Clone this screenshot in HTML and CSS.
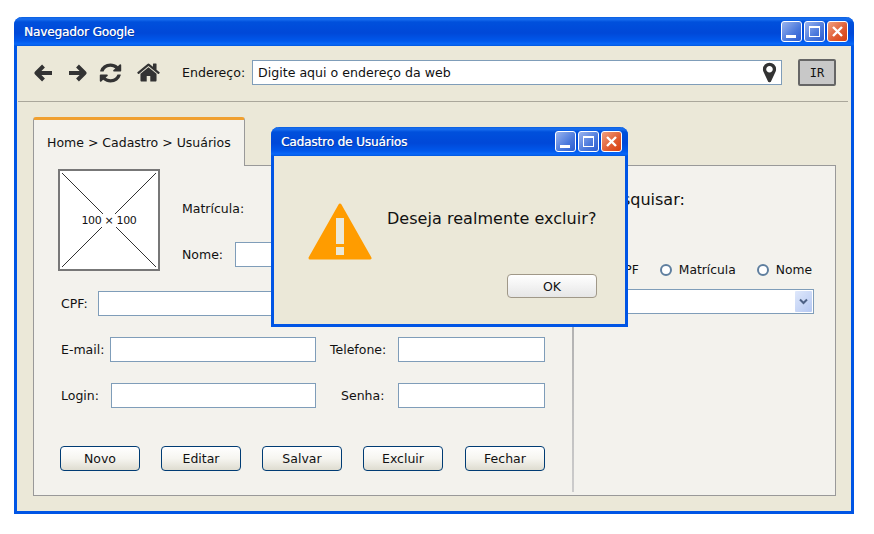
FILE: index.html
```html
<!DOCTYPE html>
<html lang="en">
<head>
  <meta charset="UTF-8">
  <meta name="viewport" content="width=device-width, initial-scale=1.0">
  <title>Navegador Google</title>
  <link rel="stylesheet" href="styles.css">
</head>
<body>

  <div class="window">
    <div class="titlebar">
      <span class="title">Navegador Google</span>
      <div class="win-buttons">
        <span class="win-btn"><i class="min-glyph"></i></span>
        <span class="win-btn"><i class="max-glyph"></i></span>
        <span class="win-btn close">
          <svg viewBox="0 0 21 21" width="21" height="21"><path d="M6 6l9 9M15 6l-9 9" stroke="#fff" stroke-width="2.4" fill="none"/></svg>
        </span>
      </div>
    </div>

    <div class="toolbar">
      <svg class="nav-icon arrow-back" viewBox="0 0 20 20" width="20" height="20"><path d="M18 10H4M9.500 3L2.500 10l7 7" stroke="#333" stroke-width="4" fill="none" stroke-linejoin="round"/></svg>
      <svg class="nav-icon arrow-forward" viewBox="0 0 20 20" width="20" height="20"><path d="M2 10h14M10.500 3l7 7-7 7" stroke="#333" stroke-width="4" fill="none" stroke-linejoin="round"/></svg>
      <svg class="nav-icon refresh" viewBox="0 0 1792 1792" width="25" height="22" preserveAspectRatio="none"><path fill="#333" d="M1639 1056q0 5-1 7-64 268-268 434.500t-478 166.500q-146 0-282.500-55t-243.500-157l-129 129q-19 19-45 19t-45-19-19-45v-448q0-26 19-45t45-19h448q26 0 45 19t19 45-19 45l-137 137q71 66 161 102t187 36q134 0 250-65t186-179q11-17 53-117 8-23 30-23h192q13 0 22.500 9.500t9.500 22.500zm25-800v448q0 26-19 45t-45 19h-448q-26 0-45-19t-19-45 19-45l138-138q-148-137-349-137-134 0-250 65t-186 179q-11 17-53 117-8 23-30 23h-199q-13 0-22.500-9.500t-9.500-22.500v-7q65-268 270-434.500t480-166.500q146 0 284 55.500t245 156.500l130-129q19-19 45-19t45 19 19 45z"/></svg>
      <svg class="nav-icon home" viewBox="0 0 1792 1792" width="25" height="25"><path fill="#333" d="M1472 992v480q0 26-19 45t-45 19h-384v-384h-256v384h-384q-26 0-45-19t-19-45v-480q0-1 .5-3t.5-3l575-474 575 474q1 2 1 6zm223-69l-62 74q-8 9-21 11h-3q-13 0-21-7l-692-577-692 577q-12 8-24 7-13-2-21-11l-62-74q-8-10-7-23.500t11-21.500l719-599q32-26 76-26t76 26l244 204v-195q0-14 9-23t23-9h192q14 0 23 9t9 23v408l219 182q10 8 11 21.500t-7 23.500z"/></svg>

      <span class="address-label">Endereço:</span>
      <div class="address-box">
        <span>Digite aqui o endereço da web</span>
        <svg viewBox="0 0 1792 1792" width="23" height="23"><path fill="#333" d="M1152 640q0-106-75-181t-181-75-181 75-75 181 75 181 181 75 181-75 75-181zm256 0q0 109-33 179l-364 774q-16 33-47.500 52t-67.500 19-67.500-19-46.500-52l-365-774q-33-70-33-179 0-212 150-362t362-150 362 150 150 362z"/></svg>
      </div>
      <div class="go-btn">IR</div>
    </div>

    <div class="content">
      <div class="tab">Home &gt; Cadastro &gt; Usuários</div>
      <div class="panel">
        <div class="form-col">
          <div class="photo-row">
            <div class="photo">
              <svg viewBox="0 0 98 98" width="98" height="98"><path d="M2 2l94 94M96 2L2 96" stroke="#333" stroke-width="1" fill="none"/></svg>
              <span>100 × 100</span>
            </div>
            <div class="photo-fields">
              <div class="row matricula"><label>Matrícula:</label></div>
              <div class="row"><label class="lbl-nome">Nome:</label><div class="field grow"></div></div>
            </div>
          </div>

          <div class="row cpf"><label class="lbl-cpf">CPF:</label><div class="field grow"></div></div>
          <div class="row">
            <label class="lbl-email">E-mail:</label><div class="field grow"></div>
            <label class="lbl-tel">Telefone:</label><div class="field small"></div>
          </div>
          <div class="row">
            <label class="lbl-login">Login:</label><div class="field grow"></div>
            <label class="lbl-senha">Senha:</label><div class="field small"></div>
          </div>

          <div class="actions">
            <button>Novo</button>
            <button>Editar</button>
            <button>Salvar</button>
            <button>Excluir</button>
            <button>Fechar</button>
          </div>
        </div>

        <div class="divider"></div>

        <div class="search-col">
          <div class="search-title">Pesquisar:</div>
          <div class="radios">
            <span class="radio"></span><span class="radio-label">CPF</span>
            <span class="radio"></span><span class="radio-label">Matrícula</span>
            <span class="radio"></span><span class="radio-label">Nome</span>
          </div>
          <div class="combo">
            <span class="combo-btn">
              <svg viewBox="0 0 17 21" width="17" height="21"><path d="M5 8.500l3.500 3.500 3.500-3.500" stroke="#4d6185" stroke-width="2" fill="none"/></svg>
            </span>
          </div>
        </div>
      </div>
    </div>
  </div>

  <div class="dialog">
    <div class="titlebar dialog-bar">
      <span class="title">Cadastro de Usuários</span>
      <div class="win-buttons">
        <span class="win-btn"><i class="min-glyph"></i></span>
        <span class="win-btn"><i class="max-glyph"></i></span>
        <span class="win-btn close">
          <svg viewBox="0 0 21 21" width="21" height="21"><path d="M6 6l9 9M15 6l-9 9" stroke="#fff" stroke-width="2.4" fill="none"/></svg>
        </span>
      </div>
    </div>
    <div class="dialog-body">
      <svg class="warn" viewBox="0 0 64 57" width="64" height="57">
        <path d="M32 2L62 55H2z" fill="#ff9c00" stroke="#ff9c00" stroke-width="3" stroke-linejoin="round"/>
        <path d="M28 15h8v26h-8zM28 44h8v8h-8z" fill="#ebe8d8"/>
      </svg>
      <span class="dialog-msg">Deseja realmente excluir?</span>
      <button class="ok-btn">OK</button>
    </div>
  </div>

</body>
</html>
```

FILE: styles.css
```css
* {
  box-sizing: border-box;
}
body {
  margin: 0;
  background: #fff;
  font-family: "DejaVu Sans", sans-serif;
  font-size: 12.5px;
  color: #111;
}
.window {
  display: flex;
  flex-direction: column;
  width: 840px;
  height: 497px;
  margin: 17px 0 0 14px;
  background: #ebe8d8;
  border: 3px solid #0055e5;
  border-top: none;
  border-radius: 8px 8px 0 0;
}
.titlebar {
  display: flex;
  align-items: center;
  justify-content: space-between;
  flex: 0 0 29px;
  margin: 0 -3px;
  padding: 0 6px 0 10px;
  border-radius: 8px 8px 0 0;
  background: linear-gradient(#0a5fe0 0, #1a70f0 2px, #0050dc 5px, #0048d8 16px, #0058ec 24px, #0a68f8 27px, #0058e0 29px);
}
.title {
  color: #fff;
  font-size: 12px;
  letter-spacing: -0.1px;
  text-shadow: 0.4px 0 0 rgba(255, 255, 255, 0.7), 1px 1px 0 #0a3a9c;
}
.win-buttons {
  display: flex;
  gap: 2px;
}
.win-btn {
  display: block;
  position: relative;
  width: 21px;
  height: 21px;
  border: 1px solid #fff;
  border-radius: 3px;
  background: linear-gradient(135deg, #9ab4ee, #4a78dc 60%, #2c5cd0);
}
.win-btn.close {
  background: linear-gradient(135deg, #f0a080, #e05a30 60%, #d84010);
}
.win-btn svg {
  position: absolute;
  left: -1px;
  top: -1px;
}
.min-glyph {
  position: absolute;
  left: 4px;
  bottom: 3px;
  width: 10px;
  height: 3px;
  background: #fff;
}
.max-glyph {
  position: absolute;
  left: 4px;
  top: 4px;
  width: 11px;
  height: 11px;
  border: 1px solid #fff;
  border-top-width: 2px;
}

.toolbar {
  display: flex;
  align-items: center;
  flex: 0 0 56px;
  margin: 0 3px 0 1px;
  padding: 0 0 2px 16px;
  border-bottom: 1px solid #aaa79b;
  font-size: 12.6px;
}
.nav-icon {
  flex: none;
}
.arrow-forward {
  margin-left: 13px;
}
.refresh {
  margin-left: 11px;
}
.home {
  margin-left: 13px;
}
.address-label {
  flex: 0 0 70px;
  margin-left: 21px;
}
.address-box {
  display: flex;
  align-items: center;
  justify-content: space-between;
  flex: none;
  width: 530px;
  height: 25px;
  padding: 0 0 0 5px;
  background: #fff;
  border: 1px solid #7f9db9;
}
.go-btn {
  flex: none;
  width: 38px;
  height: 27px;
  margin-left: 16px;
  background: #c8c8c8;
  border: 2px solid #666;
  border-radius: 2px;
  font-family: "DejaVu Sans Mono", monospace;
  font-size: 12px;
  line-height: 24px;
  text-align: center;
}

.content {
  flex: 1;
  display: flex;
  flex-direction: column;
  padding: 15px 15px 15px 16px;
}
.tab {
  position: relative;
  z-index: 1;
  width: 212px;
  height: 49px;
  margin-bottom: -1px;
  padding: 15px 0 0 13px;
  background: #f3f2ed;
  border: 1px solid #999;
  border-top: 3px solid #f0a030;
  border-bottom: none;
  border-radius: 3px 3px 0 0;
}
.panel {
  flex: 1;
  display: flex;
  background: #f3f2ed;
  border: 1px solid #999;
}
.form-col {
  flex: 0 0 538px;
  padding: 3px 27px 0 27px;
}
.photo-row {
  display: flex;
  margin-bottom: 20px;
}
.photo {
  position: relative;
  display: flex;
  align-items: center;
  justify-content: center;
  flex: none;
  width: 102px;
  height: 102px;
  margin-left: -3px;
  padding-top: 1px;
  background: #fff;
  border: 2px solid #777;
  font-size: 11px;
  letter-spacing: -0.35px;
}
.photo svg {
  position: absolute;
  left: 0;
  top: 0;
}
.photo span {
  position: relative;
  background: #fff;
  padding: 0 1px;
}
.photo-fields {
  flex: 1;
  margin-left: 22px;
  padding-top: 27px;
}
.row {
  display: flex;
  align-items: center;
  height: 25px;
  margin-bottom: 21px;
}
.photo-fields .row:last-child {
  margin-bottom: 0;
}
.field {
  height: 25px;
  background: #fff;
  border: 1px solid #7f9db9;
}
.grow {
  flex: 1;
}
.small {
  flex: 0 0 147px;
}
.lbl-nome {
  flex: 0 0 53px;
}
.lbl-cpf {
  flex: 0 0 37px;
}
.lbl-email {
  flex: 0 0 49px;
}
.lbl-login {
  flex: 0 0 50px;
}
.lbl-tel {
  flex: 0 0 68px;
  margin-left: 14px;
}
.lbl-senha {
  flex: 0 0 57px;
  margin-left: 25px;
}
.actions {
  display: flex;
  gap: 21px;
  margin: 38px 0 0 -1px;
}
.actions button:last-child {
  margin-left: 1px;
}
button {
  width: 80px;
  height: 25px;
  padding: 0;
  font: inherit;
  color: #111;
  background: linear-gradient(#fff, #f6f5f0 50%, #dedcd0);
  border: 1px solid #003c74;
  border-radius: 4px;
}
.divider {
  flex: 0 0 2px;
  margin-bottom: 3px;
  background: linear-gradient(#999, #ccc);
}
.search-col {
  flex: 1;
  padding: 24px 21px 0 0;
}
.search-title {
  padding-left: 29px;
  font-size: 16px;
}
.radios {
  display: flex;
  align-items: center;
  justify-content: flex-end;
  margin-top: 54px;
  padding-right: 2px;
  font-size: 12.3px;
}
.radio {
  width: 12px;
  height: 12px;
  margin: 0 7px 0 21px;
  background: #fff;
  border: 2px solid #5f7f9f;
  border-radius: 50%;
}
.combo {
  display: flex;
  justify-content: flex-end;
  height: 25px;
  margin-top: 12px;
  padding: 1px;
  background: #fff;
  border: 1px solid #7f9db9;
}
.combo-btn {
  width: 17px;
  height: 21px;
  background: linear-gradient(135deg, #dfe8fb, #b5c8f2);
  border-radius: 1px;
}

.dialog {
  position: absolute;
  left: 271px;
  top: 127px;
  width: 357px;
  height: 200px;
  display: flex;
  flex-direction: column;
  background: #ebe8d8;
  border: 3px solid #0055e5;
  border-top: none;
  border-radius: 8px 8px 0 0;
}
.dialog-body {
  position: relative;
  flex: 1;
}
.warn {
  position: absolute;
  left: 34px;
  top: 47px;
}
.dialog-msg {
  position: absolute;
  left: 113px;
  top: 53px;
  font-size: 16px;
  letter-spacing: 0.04px;
}
.ok-btn {
  position: absolute;
  left: 233px;
  top: 118px;
  width: 90px;
  height: 24px;
  background: linear-gradient(#fff, #e6e6e6);
  border-color: #a09888;
}
```
